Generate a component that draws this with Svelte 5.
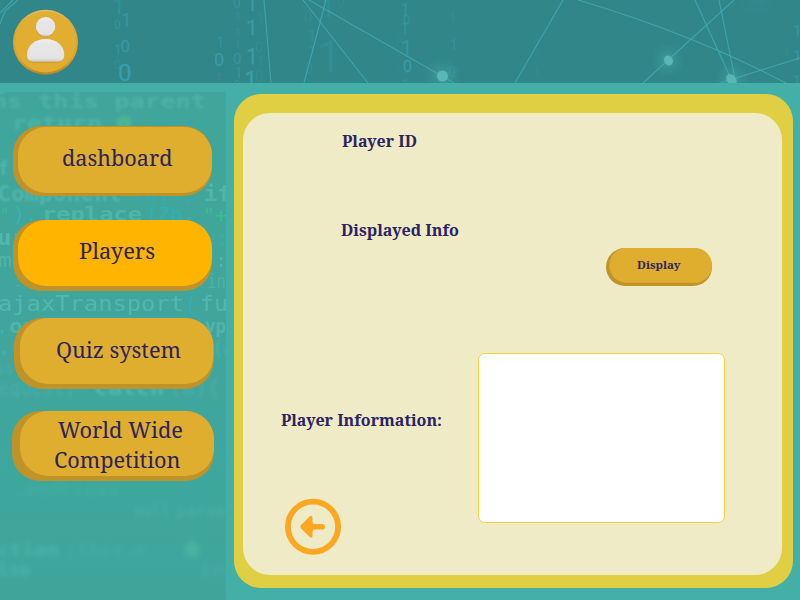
<script>
  const nav = [
    { gap: 0, left: 13, width: 199, height: 70, face: [5, 1, 194, 66], fill: '#e0ae2f', lines: [['dashboard', 49, 40, 110.5]] },
    { gap: 24, left: 13, width: 199, height: 71, face: [5, 0, 194, 66], fill: '#ffb400', lines: [['Players', 66, 39, 76]] },
    { gap: 27, left: 14, width: 199.5, height: 71, face: [6, 0, 193.5, 66], fill: '#e0ae2f', lines: [['Quiz system', 42, 40, 125]] },
    { gap: 22, left: 12, width: 202, height: 70, face: [8, 0, 194, 65], fill: '#e0ae2f', lines: [['World Wide', 46, 27, 125], ['Competition', 42, 57, 126.5]] }
  ];

  const code = [
    { t: 'ns this parent', x: -8, y: 16, s: 20, w: 214, b: 1.8, o: 0.36, bold: true },
    { t: 'return', x: 12, y: 38, s: 19, w: 90, b: 1.5, o: 0.36, bold: true },
    { t: '0', x: 116, y: 38, s: 19, w: 16, b: 2, o: 0.7, c: '#5fc78a', bold: true },
    { t: 'var', x: 150, y: 38, s: 19, w: 44, b: 2, o: 0.25, c: '#25b9cc' },
    { t: 'f', x: -1, y: 83, s: 20, w: 9, b: 0.9, o: 0.5, bold: true },
    { t: 'Component', x: -3, y: 109, s: 22, w: 125, b: 0.9, o: 0.45, bold: true },
    { t: '(0));', x: 132, y: 109, s: 21, w: 64, b: 0.8, o: 0.45, c: '#25b9cc' },
    { t: 'if', x: 204, y: 109, s: 22, w: 27, b: 0.7, o: 0.45, bold: true },
    { t: '"', x: 0, y: 130, s: 20, w: 9, b: 0.5, o: 0.8, c: '#35c690' },
    { t: ').', x: 13, y: 129, s: 20, w: 24, b: 0.5, o: 0.5, c: '#35c1ca' },
    { t: 'replace', x: 42, y: 129, s: 20, w: 100, b: 0.6, o: 0.42, bold: true },
    { t: '(Zb,', x: 146, y: 129, s: 20, w: 48, b: 0.5, o: 0.5, c: '#25b9cc' },
    { t: '"+', x: 203, y: 130, s: 20, w: 24, b: 0.5, o: 0.75, c: '#35c690' },
    { t: 'ur', x: -3, y: 153, s: 22, w: 29, b: 0.6, o: 0.5, bold: true },
    { t: 'y:', x: 204, y: 153, s: 21, w: 24, b: 0.5, o: 0.45, c: '#25b9cc' },
    { t: 'me', x: -2, y: 175, s: 20, w: 28, b: 0.5, o: 0.4 },
    { t: ':', x: 216, y: 175, s: 20, w: 10, b: 0.4, o: 0.45 },
    { t: '-', x: 12, y: 198, s: 18, w: 12, b: 0.4, o: 0.3 },
    { t: 'in', x: 207, y: 196, s: 19, w: 19, b: 0.4, o: 0.35 },
    { t: 'ajaxTransport', x: -2, y: 219, s: 21, w: 186, b: 0.35, o: 0.5 },
    { t: '(', x: 186, y: 219, s: 20, w: 9, b: 0.2, o: 0.65, c: '#25b9cc' },
    { t: 'fu', x: 200, y: 219, s: 21, w: 28, b: 0.35, o: 0.5 },
    { t: '.', x: -3, y: 241, s: 20, w: 10, b: 0.5, o: 0.6, c: '#35c1ca' },
    { t: 'on', x: 9, y: 241, s: 20, w: 28, b: 0.6, o: 0.45, bold: true },
    { t: 'yp', x: 205, y: 241, s: 20, w: 21, b: 0.5, o: 0.45, bold: true },
    { t: '.(', x: -2, y: 263, s: 20, w: 24, b: 0.8, o: 0.4, bold: true },
    { t: '(c', x: 213, y: 263, s: 20, w: 20, b: 0.8, o: 0.4 },
    { t: 'ss', x: -4, y: 282, s: 18, w: 18, b: 1.5, o: 0.25 },
    { t: 'equest)', x: -2, y: 303, s: 19, w: 78, b: 1.5, o: 0.25 },
    { t: 'catch', x: 94, y: 303, s: 20, w: 70, b: 1.5, o: 0.5, bold: true },
    { t: '(a){', x: 170, y: 303, s: 19, w: 50, b: 1.4, o: 0.25 },
    { t: '.addClass', x: 12, y: 404, s: 17, w: 108, b: 2.6, o: 0.2 },
    { t: 'null', x: 134, y: 425, s: 17, w: 36, b: 2, o: 0.3 },
    { t: 'param', x: 176, y: 425, s: 17, w: 50, b: 2, o: 0.3 },
    { t: 'ction', x: -3, y: 464, s: 18, w: 62, b: 2.4, o: 0.35, bold: true },
    { t: '/this.e', x: 66, y: 464, s: 18, w: 80, b: 2.6, o: 0.2 },
    { t: '0', x: 184, y: 464, s: 18, w: 16, b: 3, o: 0.7, c: '#5ac9a8', bold: true },
    { t: 'else', x: -12, y: 484, s: 18, w: 42, b: 2.5, o: 0.35, bold: true },
    { t: 'in', x: 198, y: 484, s: 18, w: 28, b: 2.5, o: 0.25 }
  ];

  const bits = [
    ['1', 113, 14, 20, 0.45], ['1', 121, 26, 19, 0.7], ['0', 114, 29, 12, 0.5], ['0', 120.5, 52, 17, 0.75],
    ['1', 114, 55, 14, 0.6], ['0', 114, 69, 13, 0.3], ['0', 118, 81, 24, 0.95],
    ['1', 216, 47, 15, 0.5], ['0', 214, 66, 18, 0.9], ['1', 216, 81, 11, 0.35],
    ['0', 233, 8, 14, 0.55], ['1', 235, 20, 10, 0.3], ['1', 235, 36, 10, 0.3], ['1', 235, 49, 10, 0.3],
    ['0', 233, 64, 15, 0.6], ['1', 235, 78, 14, 0.5], ['0', 233, 91, 14, 0.45],
    ['1', 246, 11, 21, 0.85], ['1', 246, 35, 21, 0.85], ['1', 246, 64, 22, 0.9], ['1', 244, 88, 24, 1],
    ['1', 257, 23, 12, 0.25], ['0', 255, 52, 15, 0.3], ['1', 257, 66, 14, 0.25], ['0', 255, 81, 15, 0.3],
    ['0', 304, 22, 15, 0.25], ['1', 307, 42, 18, 0.3], ['1', 307, 58, 16, 0.3], ['0', 305, 73, 14, 0.3],
    ['1', 321, 17, 25, 0.35], ['1', 317, 72, 44, 0.3], ['0', 337, 7, 14, 0.2],
    ['1', 400, 16, 18, 0.5], ['0', 403, 24, 13, 0.5], ['1', 400, 34, 16, 0.5], ['1', 401, 55, 20, 0.65],
    ['0', 403, 72, 16, 0.85], ['1', 401, 91, 16, 0.4], ['0', 396, 43, 9, 0.2], ['0', 395, 72, 10, 0.2],
    ['1', 450, 21, 11, 0.3], ['1', 450, 50, 14, 0.45], ['0', 448, 77, 14, 0.35],
    ['1', 534, 42, 12, 0.25], ['1', 534, 58, 12, 0.25], ['1', 534, 75, 10, 0.2],
    ['1', 793, 36, 15, 0.6], ['1', 793, 61, 15, 0.6], ['1', 793, 86, 14, 0.6], ['1', 784, 55, 10, 0.2]
  ];
</script>

{#snippet label(text, x, y, width, size, bold = false)}
  <text {x} {y} textLength={width} lengthAdjust="spacingAndGlyphs" font-size={size} class="label" class:bold>{text}</text>
{/snippet}

<div class="app">
  <header>
    <svg class="network" viewBox="0 0 800 83" aria-hidden="true">
      <defs>
        <radialGradient id="glow">
          <stop offset="0" stop-color="#59b8ae" stop-opacity=".65" />
          <stop offset=".4" stop-color="#48a9a3" stop-opacity=".28" />
          <stop offset="1" stop-color="#43a59e" stop-opacity="0" />
        </radialGradient>
      </defs>
      <g class="bits">
        {#each bits as [t, x, y, s, o]}
          <text {x} {y} font-size={s} opacity={o}>{t}</text>
        {/each}
      </g>
      <path class="links" d="M13 0L0 13M18 0L5 11L0 24M264 0L271 83M326 0L304 83M303 0L368 83M309 0L454 83M563 0L515 83M578 0Q690 33 786 83M734 0L643 83M695 0L731 79M719 0L735 79M720 83L800 58" />
      <circle cx="442" cy="76" r="20" fill="url(#glow)" />
      <circle cx="668" cy="60" r="17" fill="url(#glow)" />
      <circle cx="732" cy="79" r="18" fill="url(#glow)" />
      <circle cx="756" cy="-3" r="22" fill="url(#glow)" opacity=".2" />
      <circle cx="442.5" cy="76" r="5.5" fill="#5bb7b3" />
      <ellipse cx="668.5" cy="60.5" rx="4.3" ry="5.2" transform="rotate(-25 668.5 60.5)" fill="#5bb7b3" />
      <ellipse cx="731.5" cy="80" rx="4.5" ry="6.5" transform="rotate(-35 731.5 80)" fill="#5bb7b3" />
    </svg>
    <svg class="avatar" viewBox="0 0 66 66" role="img" aria-label="Profile">
      <defs>
        <linearGradient id="rim" x2="0" y2="1">
          <stop offset="0" stop-color="#e6ba67" />
          <stop offset=".25" stop-color="#e0a832" />
          <stop offset=".75" stop-color="#dfa02a" />
          <stop offset="1" stop-color="#bd8427" />
        </linearGradient>
        <linearGradient id="person" x2="0" y2="1">
          <stop offset="0" stop-color="#f1f0ef" />
          <stop offset=".25" stop-color="#e6e6e6" />
          <stop offset=".85" stop-color="#e4e4e4" />
          <stop offset="1" stop-color="#c9c6bf" />
        </linearGradient>
      </defs>
      <circle cx="32.5" cy="32.3" r="32.5" fill="url(#rim)" />
      <circle cx="32.5" cy="31.9" r="30.5" fill="#e1ae31" />
      <g fill="#b98727" opacity=".45" transform="translate(0 .7)">
        <circle cx="32.6" cy="16.8" r="9.8" />
        <path d="M14 45C14 35.5 22 29 32.6 29S51.3 35.5 51.3 45C51.3 50.5 48 52 43 52H22C17 52 14 50.5 14 45Z" />
      </g>
      <circle cx="32.6" cy="16.7" r="9.7" fill="url(#person)" />
      <path fill="url(#person)" d="M14 44.8C14 35.5 22 29 32.6 29S51.3 35.5 51.3 44.8C51.3 50.5 48 51.8 43 51.8H22C17 51.8 14 50.5 14 44.8Z" />
    </svg>
  </header>

  <main>
    <aside>
      <svg class="code" viewBox="0 0 226 508" aria-hidden="true">
        {#each code as l}
          <text x={l.x} y={l.y} textLength={l.w} lengthAdjust="spacingAndGlyphs" font-size={l.s} font-weight={l.bold ? 700 : 400} fill={l.c ?? '#68c9be'} opacity={l.o} style:filter={`blur(${l.b}px)`}>{l.t}</text>
        {/each}
      </svg>
      <nav>
        {#each nav as b}
          <button style:width={`${b.width}px`} style:height={`${b.height}px`} style:margin-left={`${b.left}px`} style:margin-top={`${b.gap}px`}>
            <svg width={b.width} height={b.height}>
              <rect width={b.width} height={b.height} rx="28" fill="#c09329" />
              <rect x={b.face[0]} y={b.face[1]} width={b.face[2]} height={b.face[3]} rx="28" fill={b.fill} />
              {#each b.lines as [t, x, y, w]}
                {@render label(t, x, y, w, 22)}
              {/each}
            </svg>
          </button>
        {/each}
      </nav>
    </aside>

    <section class="panel">
      <div class="content">
        <svg class="heading" width="200" height="28">{@render label('Player ID', 0, 20, 75, 16, true)}</svg>
        <svg class="heading second" width="200" height="28">{@render label('Displayed Info', 0, 20, 118, 16, true)}</svg>
        <button class="display">
          <svg width="106" height="38">
            <rect width="106" height="38" rx="19" fill="#c09329" />
            <rect x="3.3" width="102.7" height="34.7" rx="17.3" fill="#e0ae2f" />
            {@render label('Display', 31, 21, 43.5, 11, true)}
          </svg>
        </button>
        <div class="info">
          <div class="left">
            <svg class="info-label" width="180" height="28">{@render label('Player Information:', 0, 20, 161, 16, true)}</svg>
            <button class="back" aria-label="Back">
              <svg width="56" height="56" viewBox="0 0 56 56">
                <circle cx="28" cy="27.7" r="25.1" fill="none" stroke="#fba722" stroke-width="5.8" />
                <path d="M15.8 26.3L24.8 17.3Q27.3 15.5 27.5 18.7V21.7Q27.5 24.9 29 24.9H37.5Q40 25 40 27.7T37.5 30.6H29Q27.5 30.6 27.5 33.7V36.7Q27.3 39.9 24.8 38.1L15.8 29.2Q14.6 27.7 15.8 26.3Z" fill="#fba722" />
              </svg>
            </button>
          </div>
          <div class="output"></div>
        </div>
      </div>
    </section>
  </main>
</div>

<style>
  :global(body) { margin: 0; overflow: hidden; }
  .app {
    width: 800px; height: 600px; overflow: hidden;
    display: flex; flex-direction: column;
    background: #43afa7;
  }
  header {
    position: relative; flex: 0 0 83px; box-sizing: border-box;
    padding: 10px 13px; overflow: hidden;
    background: #31868a;
  }
  .network { position: absolute; inset: 0; width: 800px; height: 83px; }
  .bits { font-family: "Roboto", sans-serif; fill: #3a9faa; stroke: #3a9faa; stroke-width: .3; filter: blur(.4px); }
  .links { fill: none; stroke: #43a8af; stroke-width: 1.1; opacity: .9; }
  .avatar { position: relative; display: block; width: 66px; height: 66px; }
  main { flex: 1; display: flex; align-items: flex-start; gap: 8px; }
  aside {
    position: relative; flex: 0 0 226px; height: 508px; margin-top: 9px;
    overflow: hidden; border-top-left-radius: 12px 4px;
    background: linear-gradient(#40a59b 0, #40a59b 25%, #40a59d 55%, #3da79e 78%, #40a59a 85%, #3fa69d 92%, #40a49a 100%);
  }
  .code { position: absolute; inset: 0; width: 226px; height: 508px; font-family: "DejaVu Sans Mono", monospace; }
  nav { position: relative; display: flex; flex-direction: column; padding-top: 34px; }
  button { border: 0; padding: 0; background: none; flex: none; cursor: pointer; }
  svg { display: block; overflow: visible; }
  .network, .code { overflow: hidden; }
  .label {
    font-family: "Noto Serif", "Droid Serif", "DejaVu Serif Condensed", "DejaVu Serif", serif;
    fill: #2c2361;
  }
  .bold { font-weight: 700; }
  .panel {
    box-sizing: border-box; width: 559px; height: 494px; margin-top: 11px;
    padding: 19px 11px 13px 9px;
    background: #e1cf43; border-radius: 27px;
  }
  .content {
    box-sizing: border-box; height: 462px; padding: 14px 57px 0 38px;
    display: flex; flex-direction: column;
    background: #efebc7; border-radius: 27px;
  }
  .heading { margin-left: 61px; flex: none; }
  .second { margin: 61px 0 0 60px; }
  .display { align-self: flex-end; margin: 4px 13.5px 0 0; }
  .info { display: flex; justify-content: space-between; margin-top: 67px; }
  .left { display: flex; flex-direction: column; align-items: flex-start; padding-top: 53px; }
  .back { margin: 65px 0 0 4px; }
  .output {
    box-sizing: border-box; width: 247px; height: 170px;
    border: 1px solid #f5d33d; border-radius: 7px; background: #fff;
  }
</style>
